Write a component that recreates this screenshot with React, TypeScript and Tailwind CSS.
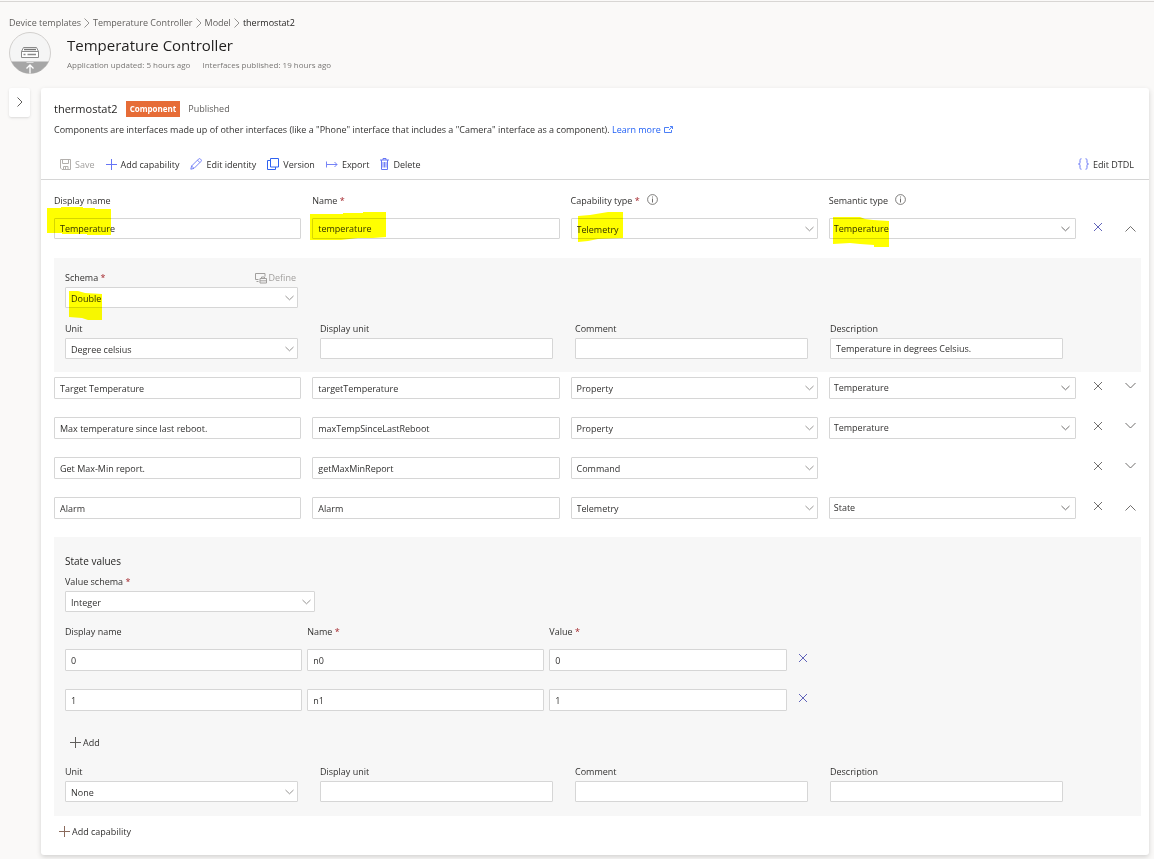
import React, { useId } from 'react'

/*
  ? ICONS
*/
const iconProps = { fill: 'none', stroke: 'currentColor', 'aria-hidden': true } as const

function ChevronDown({ className = '' }: { className?: string }) {
  return (
    <svg width="9" height="11" viewBox="0 0 9 11" {...iconProps} className={className}>
      <path d="M.5 4l4 3.800 4-3.800" strokeWidth="0.900" />
    </svg>
  )
}

function ChevronRight({ className = '' }: { className?: string }) {
  return (
    <svg width="8" height="12" viewBox="0 0 8 12" {...iconProps} className={className}>
      <path d="M1.500 1.500L6 6l-4.500 4.500" />
    </svg>
  )
}

function Toggle({ open }: { open: boolean }) {
  return (
    <svg width="13" height="14" viewBox="0 0 13 14" {...iconProps}>
      {open ? <path d="M1.500 11.500l5-5 5 5" strokeWidth="0.900" /> : <path d="M1.500 4l5 5 5-5" strokeWidth="0.900" />}
    </svg>
  )
}

function Cross() {
  return (
    <svg width="10" height="10" viewBox="0 0 10 10" {...iconProps} className="mb-px">
      <path d="M1 1l8 8M9 1L1 9" strokeWidth="0.900" />
    </svg>
  )
}

function Plus({ className = '' }: { className?: string }) {
  return (
    <svg width="11" height="11" viewBox="0 0 11 11" {...iconProps} className={className}>
      <path d="M5.500 0v11M0 5.500h11" />
    </svg>
  )
}

function Info() {
  return (
    <svg width="11" height="11" viewBox="0 0 11 11" {...iconProps} className="mb-1 text-[#605e5c]">
      <circle cx="5.500" cy="5.500" r="4.900" strokeWidth="0.800" />
      <path d="M5.500 4.500v4M5.500 2.500v1" strokeWidth="0.900" />
    </svg>
  )
}

function SaveIcon() {
  return (
    <svg width="11" height="11" viewBox="0 0 11 11" {...iconProps}>
      <path d="M.5.5h10v10h-8.500l-1.500-1.500z" />
      <path d="M2.500.5v4h6v-4M3.500 10.500v-3h4.500v3M5.500 8v2" />
    </svg>
  )
}

function PencilIcon() {
  return (
    <svg width="12" height="12" viewBox="0 0 12 12" {...iconProps}>
      <path d="M.8 11.200l.8-3.200L8.500 1.100a1.400 1.400 0 0 1 2 0l.4.4a1.400 1.400 0 0 1 0 2L4 10.400zM7.500 2.200l2.300 2.300M1.600 8l2.400 2.400" strokeWidth="0.900" />
    </svg>
  )
}

function CopyIcon() {
  return (
    <svg width="12" height="12" viewBox="0 0 12 12" {...iconProps} className="text-[#2f62f0]">
      <path d="M3.500.5h8v8.500h-8z" />
      <path d="M3.500 2.500h-3v9h8v-2.500" />
    </svg>
  )
}

function ExportIcon() {
  return (
    <svg width="12" height="11" viewBox="0 0 12 11" {...iconProps}>
      <path d="M.5 2.500v6M1 5.500h10M8.500 3l2.500 2.500L8.500 8" strokeWidth="0.900" />
    </svg>
  )
}

function TrashIcon() {
  return (
    <svg width="9" height="12" viewBox="0 0 9 12" {...iconProps}>
      <path d="M0 2h9M3 2V.5h3V2M1.500 2v9.500h6V2" />
      <path d="M3 4v5.500M4.500 4v5.500M6 4v5.500" strokeWidth="0.900" />
    </svg>
  )
}

function BracesIcon() {
  return (
    <svg width="11" height="12" viewBox="0 0 11 12" {...iconProps}>
      <path d="M3.500.8c-1.500 0-1.500.7-1.500 1.700v2C2 5.500 1.500 6 .5 6c1 0 1.500.5 1.500 1.500v2c0 1 0 1.700 1.500 1.700M7.500.8C9 .8 9 1.500 9 2.500v2c0 1 .5 1.500 1.500 1.500C9.500 6 9 6.500 9 7.500v2c0 1 0 1.700-1.500 1.700" />
    </svg>
  )
}

function LinkOutIcon() {
  return (
    <svg width="9" height="7" viewBox="0 0 9 7" {...iconProps} className="ml-[3px] inline-block align-baseline">
      <path d="M5 1.500H.5v5h7V4M5 4L8 .8M6 .5h2.500V3" strokeWidth="0.800" />
    </svg>
  )
}

function DefineIcon() {
  return (
    <svg width="12" height="11" viewBox="0 0 12 11" {...iconProps}>
      <path d="M3.500 6.500h-3v-6h9.500v3M1.500 8.500h2" />
      <path d="M6.500 5.500V4h3v1.500M5 5.500h6.500v4.500H5zM5 7.800h6.500" />
    </svg>
  )
}

function DeviceIcon() {
  return (
    <svg width="42" height="42" viewBox="0 0 42 42" fill="none" aria-hidden="true" className="shrink-0">
      <circle cx="21" cy="21" r="20.500" fill="#f5f5f5" stroke="#d2d0ce" />
      <path d="M2.300 29.500h37.400a20.500 20.500 0 0 1-37.400 0z" fill="#a6a6a6" />
      <path d="M14.500 15.500h13l2 4v6h-17v-6z" fill="#fff" stroke="#8a8a8a" />
      <path d="M12.500 19.500h17" stroke="#8a8a8a" />
      <path d="M15 17.500h12" stroke="#777" strokeWidth="1.500" />
      <path d="M14.500 22.500h2M18.500 22.500h8.500" stroke="#8a8a8a" strokeWidth="1.500" />
      <path d="M17.500 30.500h7" stroke="#ddd" />
      <path d="M21 41.500V33M17.500 36.500l3.500-3.500 3.500 3.500" stroke="#fff" strokeWidth="1.300" />
    </svg>
  )
}

/*
  ? FIELDS
*/
const box = 'block w-full rounded-[1px] border border-[#d6d6d6] bg-white text-[9px] text-[#323130] outline-none'

type Size = 'sm' | 'md'
const heights: Record<Size, string> = { sm: 'h-[21px]', md: 'h-[22px]' }

function Label({ htmlFor, children, required, info }: { htmlFor?: string; children: React.ReactNode; required?: boolean; info?: boolean }) {
  return (
    <div className="flex h-4 items-center gap-[7px]">
      <label htmlFor={htmlFor} className="whitespace-nowrap text-[#323130]">
        {children}
        {required && <span className="text-[#a4262c]"> *</span>}
      </label>
      {info && <Info />}
    </div>
  )
}

function TextBox({ id, name, value = '', size = 'md' }: { id?: string; name?: string; value?: string; size?: Size }) {
  return <input id={id} aria-label={name} type="text" defaultValue={value} className={`${box} pl-[5px] ${heights[size]}`} />
}

function Dropdown({ id, name, value, size = 'md', tight }: { id?: string; name?: string; value: string; size?: Size; tight?: boolean }) {
  return (
    <div className="relative">
      <select id={id} aria-label={name} defaultValue={value} className={`${box} ${heights[size]} appearance-none ${tight ? 'pl-1' : 'pt-0.5 pl-[5px]'}`}>
        <option>{value}</option>
      </select>
      <ChevronDown className={`pointer-events-none absolute top-[5px] ${tight ? 'right-1.5 text-[#605e5c]' : 'right-1 text-[#8a8886]'}`} />
    </div>
  )
}

function Field({ label, value = '', select }: { label: string; value?: string; select?: boolean }) {
  const id = useId()
  return (
    <div className="flex flex-col gap-px">
      <Label htmlFor={id}>{label}</Label>
      {select ? <Dropdown id={id} value={value} size="sm" /> : <TextBox id={id} value={value} size="sm" />}
    </div>
  )
}

// Marker stroke laid over a field
function Highlight({ points, className }: { points: string; className: string }) {
  return (
    <svg aria-hidden="true" className={`pointer-events-none absolute overflow-visible mix-blend-multiply ${className}`} width="76" height="30">
      <polygon points={points} fill="#ffff00" />
    </svg>
  )
}

/*
  ? ROWS
*/
const rowGrid = 'grid grid-cols-[repeat(4,minmax(0,1fr))_22px_21px] gap-x-[11px]'
const stateGrid = 'grid w-3/4 grid-cols-[repeat(3,minmax(0,1fr))_22px] gap-x-[5px]'
const panelGrid = 'grid grid-cols-4 gap-x-[22px]'

type Capability = { display: string; name: string; type: string; semantic?: string; open?: boolean; marked?: boolean }

function CapabilityRow({ row, ids }: { row: Capability; ids?: string[] }) {
  const label = (i: number, text: string) => (ids ? { id: ids[i] } : { name: text })
  const size: Size = ids ? 'sm' : 'md'
  return (
    <div className={rowGrid}>
      <div className="relative">
        <TextBox {...label(0, 'Display name')} value={row.display} size={size} />
        {row.marked && <Highlight className="-top-[11px] -left-[7px]" points="0,1 14,1 14,0 36,0 36,1 48,1 48,2 64,2 64,28 40,28 40,27 15,27 15,26 0,26" />}
      </div>
      <div className="relative">
        <TextBox {...label(1, 'Name')} value={row.name} size={size} />
        {row.marked && <Highlight className="-top-1.5 -left-0.5" points="0,2 33,2 33,1 53,1 53,0 76,0 76,25 63,26 48,26 31,28 0,28" />}
      </div>
      <div className="relative">
        <Dropdown {...label(2, 'Capability type')} value={row.type} size={size} />
        {row.marked && <Highlight className="-top-1.5 left-[7px]" points="0,4 12,3 24,1 30,0 45,0 45,26 20,27 10,29 0,30" />}
      </div>
      <div className="relative">
        {row.semantic && <Dropdown {...label(3, 'Semantic type')} value={row.semantic} size={size} tight />}
        {row.marked && <Highlight className="-top-px left-1" points="0,0 27,0 32,2 40,3 56,4 56,30 41,30 41,28 27,27 17,26 0,27" />}
      </div>
      <button type="button" aria-label="Remove capability" className={`flex h-[18px] items-center justify-center ${row.marked ? 'text-[#4f52b2]' : 'text-[#605e5c]'}`}>
        <Cross />
      </button>
      <button type="button" aria-label={row.open ? 'Collapse' : 'Expand'} className="flex h-[18px] items-center justify-center text-[#605e5c]">
        <Toggle open={!!row.open} />
      </button>
    </div>
  )
}

function StateRow({ index }: { index: string }) {
  return (
    <>
      <TextBox name="Display name" value={index} />
      <TextBox name="State name" value={`n${index}`} />
      <TextBox name="Value" value={index} />
      <button type="button" aria-label="Remove value" className="flex h-[18px] items-center justify-center text-[#4f52b2]">
        <Cross />
      </button>
    </>
  )
}

function Tool({ icon, children, disabled }: { icon: React.ReactNode; children: React.ReactNode; disabled?: boolean }) {
  return (
    <button type="button" disabled={disabled} className="flex items-center gap-1 whitespace-nowrap text-[#323130] disabled:text-[#a19f9d]">
      <span className={`pb-0.5 ${disabled ? 'text-[#b3b0ad]' : 'text-[#6675f5]'}`}>{icon}</span>
      {children}
    </button>
  )
}

const rows: Capability[] = [
  { display: 'Target Temperature', name: 'targetTemperature', type: 'Property', semantic: 'Temperature' },
  { display: 'Max temperature since last reboot.', name: 'maxTempSinceLastReboot', type: 'Property', semantic: 'Temperature' },
  { display: 'Get Max-Min report.', name: 'getMaxMinReport', type: 'Command' },
  { display: 'Alarm', name: 'Alarm', type: 'Telemetry', semantic: 'State', open: true },
]

const crumbs = ['Device templates', 'Temperature Controller', 'Model']

export default function App() {
  return (
    <div className="min-h-screen bg-[#faf9f8] pb-1 font-['Open_Sans','Noto_Sans',sans-serif] text-[9px] leading-4 text-[#323130]">
      <div className="h-0.5 border-b border-[#d8d6d4]" />

      <header className="px-[9px] pt-[13px]">
        <nav aria-label="Breadcrumb" className="flex h-4 items-center gap-0.5 text-[#605e5c]">
          {crumbs.map((crumb) => (
            <React.Fragment key={crumb}>
              <a href="#">{crumb}</a>
              <ChevronRight className="text-[#979593]" />
            </React.Fragment>
          ))}
          <span className="text-[#201f1e]">thermostat2</span>
        </nav>
        <div className="mt-px flex items-end gap-4">
          <DeviceIcon />
          <div className="pb-px">
            <h1 className="text-[15px] leading-5 font-medium text-[#201f1e]">Temperature Controller</h1>
            <p className="mt-0.5 flex gap-3 text-[8px] leading-4 text-[#797775]">
              <span>Application updated: 5 hours ago</span>
              <span>Interfaces published: 19 hours ago</span>
            </p>
          </div>
        </div>
      </header>

      <main className="mt-3.5 flex items-start gap-[11px] pr-[5px] pl-[9px]">
        <button type="button" aria-label="Open navigation" className="flex h-[29px] w-[21px] shrink-0 items-center justify-center rounded-xs bg-white pb-0.5 text-[#605e5c] shadow">
          <ChevronRight />
        </button>

        <section className="min-w-0 flex-1 rounded-[3px] bg-white pt-3 pb-[11px] shadow-[0_2px_5px_rgba(0,0,0,0.16)]">
          <div className="px-[13px]">
            <div className="flex h-[18px] items-center">
              <h2 className="text-[11px] text-[#201f1e]">thermostat2</h2>
              <span className="ml-2 bg-[#e66c37] px-1 text-[8px] font-bold text-white">Component</span>
              <span className="ml-2 text-[#605e5c]">Published</span>
            </div>
            <p className="mt-1">
              Components are interfaces made up of other interfaces (like a "Phone" interface that includes a "Camera" interface as a component).{' '}
              <a href="#" className="text-[#1f5ff5]">
                Learn more
                <LinkOutIcon />
              </a>
            </p>
          </div>

          <div className="mt-3.5 flex h-7 items-center gap-[11px] border-b border-[#d6d6d6] pr-[15px] pb-px pl-[19px]">
            <Tool icon={<SaveIcon />} disabled>Save</Tool>
            <Tool icon={<Plus />}>Add capability</Tool>
            <Tool icon={<PencilIcon />}>Edit identity</Tool>
            <Tool icon={<CopyIcon />}>Version</Tool>
            <Tool icon={<ExportIcon />}>Export</Tool>
            <Tool icon={<TrashIcon />}>Delete</Tool>
            <div className="ml-auto">
              <Tool icon={<BracesIcon />}>Edit DTDL</Tool>
            </div>
          </div>

          <div className="pt-[13px] pr-2 pl-[13px]">
            <div className={`${rowGrid} mb-[9px]`}>
              <Label htmlFor="cap-display">Display name</Label>
              <Label htmlFor="cap-name" required>Name</Label>
              <Label htmlFor="cap-type" required info>Capability type</Label>
              <Label htmlFor="cap-semantic" info>Semantic type</Label>
            </div>
            <CapabilityRow
              ids={['cap-display', 'cap-name', 'cap-type', 'cap-semantic']}
              row={{ display: 'Temperature', name: 'temperature', type: 'Telemetry', semantic: 'Temperature', open: true, marked: true }}
            />

            {/* Temperature details */}
            <div className="mt-[19px] mb-[5px] bg-[#f7f7f7] pt-3 pr-[78px] pb-[13px] pl-[11px]">
              <div className={`${panelGrid} mb-[13px]`}>
                <div className="flex flex-col gap-px">
                  <div className="flex items-center justify-between pr-0.5">
                    <Label htmlFor="schema" required>Schema</Label>
                    <button type="button" disabled className="flex items-center gap-0.5 text-[#a19f9d]">
                      <DefineIcon />
                      Define
                    </button>
                  </div>
                  <div className="relative">
                    <Dropdown id="schema" value="Double" size="sm" />
                    <Highlight className="top-1 left-1" points="0,0 9,0 16,2 33,3 33,29 19,29 13,27 0,26" />
                  </div>
                </div>
              </div>
              <div className={panelGrid}>
                <Field label="Unit" value="Degree celsius" select />
                <Field label="Display unit" />
                <Field label="Comment" />
                <Field label="Description" value="Temperature in degrees Celsius." />
              </div>
            </div>

            <div className="flex flex-col gap-[18px]">
              {rows.map((row) => (
                <CapabilityRow key={row.display} row={row} />
              ))}
            </div>

            {/* Alarm details */}
            <div className="mt-[18px] bg-[#f7f7f7] pt-[15px] pr-[78px] pb-3.5 pl-[11px]">
              <h3 className="text-[10px] leading-[18px] text-[#201f1e]">State values</h3>
              <div className="mt-1 flex w-1/4 flex-col gap-px">
                <Label htmlFor="value-schema" required>Value schema</Label>
                <Dropdown id="value-schema" value="Integer" size="sm" />
              </div>
              <div className={`${stateGrid} mt-3`}>
                <Label>Display name</Label>
                <Label required>Name</Label>
                <Label required>Value</Label>
              </div>
              <div className={`${stateGrid} mt-[9px] gap-y-[18px]`}>
                <StateRow index="0" />
                <StateRow index="1" />
              </div>
              <button type="button" className="mt-5 ml-[5px] flex h-6 items-center gap-0.5">
                <Plus className="mb-0.5 text-[#605e5c]" />
                Add
              </button>
              <div className={`${panelGrid} mt-[9px]`}>
                <Field label="Unit" value="None" select />
                <Field label="Display unit" />
                <Field label="Comment" />
                <Field label="Description" />
              </div>
            </div>

            <button type="button" className="mt-1 ml-[5px] flex h-6 items-center gap-0.5">
              <Plus className="mb-0.5 text-[#8a6a5c]" />
              Add capability
            </button>
          </div>
        </section>
      </main>
    </div>
  )
}
